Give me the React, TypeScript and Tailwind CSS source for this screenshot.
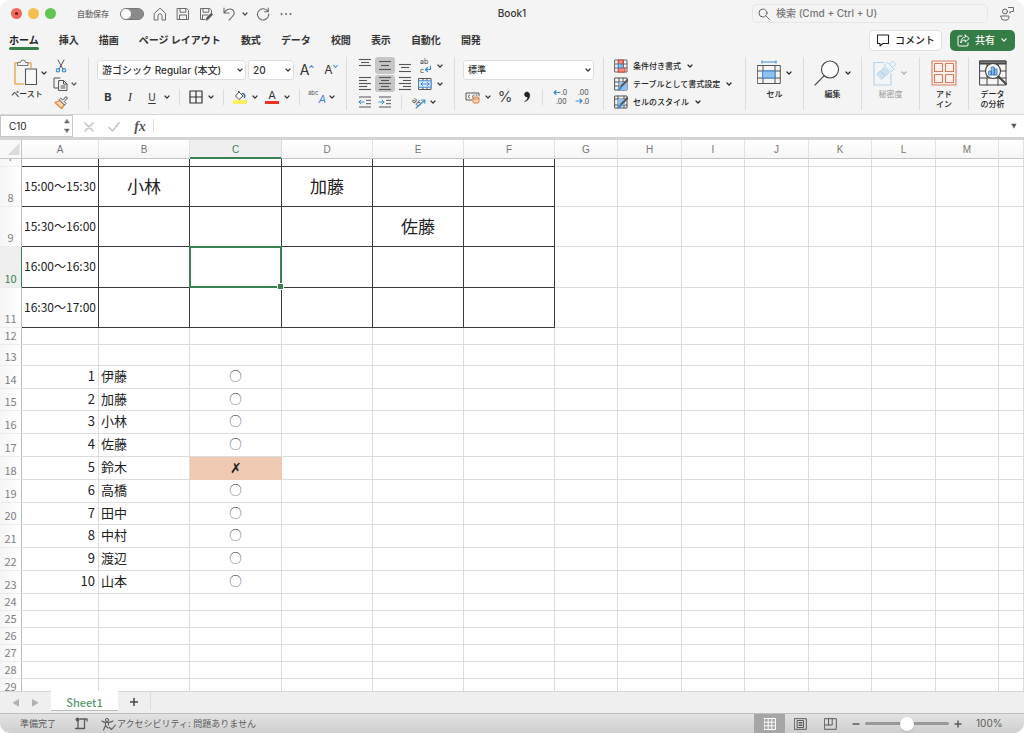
import { useState, type ReactNode } from 'react';
import clsx from 'clsx';

type IconProps = {
  w: number;
  h: number;
  children: ReactNode;
  className?: string;
};

type Row = {
  no: number;
  height: string;
  cells?: string[];
  schedule?: boolean;
};

const tabs = ['挿入', '描画', 'ページ レイアウト', '数式', 'データ', '校閲', '表示', '自動化', '開発'];

const columns = [
  { name: 'A', width: 'w-[77px]' },
  { name: 'B', width: 'w-[91px]' },
  { name: 'C', width: 'w-[92px]' },
  { name: 'D', width: 'w-[91px]' },
  { name: 'E', width: 'w-[91px]' },
  { name: 'F', width: 'w-[91px]' },
  { name: 'G', width: 'w-[63px]' },
  { name: 'H', width: 'w-[64px]' },
  { name: 'I', width: 'w-[63px]' },
  { name: 'J', width: 'w-[64px]' },
  { name: 'K', width: 'w-[63px]' },
  { name: 'L', width: 'w-[64px]' },
  { name: 'M', width: 'w-[63px]' },
  { name: '', width: '' },
];

const rows: Row[] = [
  { no: 7, height: 'h-[8px]', schedule: true },
  { no: 8, height: 'h-[40px]', cells: ['15:00〜15:30', '小林', '', '加藤'], schedule: true },
  { no: 9, height: 'h-[40px]', cells: ['15:30〜16:00', '', '', '', '佐藤'], schedule: true },
  { no: 10, height: 'h-[41px]', cells: ['16:00〜16:30'], schedule: true },
  { no: 11, height: 'h-[40px]', cells: ['16:30〜17:00'], schedule: true },
  { no: 12, height: 'h-[17px]' },
  { no: 13, height: 'h-[21px]' },
  { no: 14, height: 'h-[23px]', cells: ['1', '伊藤', '◯'] },
  { no: 15, height: 'h-[22px]', cells: ['2', '加藤', '◯'] },
  { no: 16, height: 'h-[23px]', cells: ['3', '小林', '◯'] },
  { no: 17, height: 'h-[23px]', cells: ['4', '佐藤', '◯'] },
  { no: 18, height: 'h-[23px]', cells: ['5', '鈴木', '✗'] },
  { no: 19, height: 'h-[23px]', cells: ['6', '高橋', '◯'] },
  { no: 20, height: 'h-[22px]', cells: ['7', '田中', '◯'] },
  { no: 21, height: 'h-[23px]', cells: ['8', '中村', '◯'] },
  { no: 22, height: 'h-[23px]', cells: ['9', '渡辺', '◯'] },
  { no: 23, height: 'h-[23px]', cells: ['10', '山本', '◯'] },
  { no: 24, height: 'h-[17px]' },
  { no: 25, height: 'h-[17px]' },
  { no: 26, height: 'h-[17px]' },
  { no: 27, height: 'h-[17px]' },
  { no: 28, height: 'h-[17px]' },
  { no: 29, height: 'h-[17px]' },
];

function Icon({ w, h, children, className }: IconProps) {
  return (
    <svg
      width={w}
      height={h}
      viewBox={`0 0 ${w} ${h}`}
      fill="none"
      stroke="currentColor"
      strokeLinecap="round"
      strokeLinejoin="round"
      aria-hidden="true"
      className={clsx('shrink-0', className)}
    >
      {children}
    </svg>
  );
}

function Chevron({ className }: { className?: string }) {
  return (
    <Icon w={8} h={8} className={className}>
      <path d="M2 3l2 2.2L6 3" strokeWidth="1.2" />
    </Icon>
  );
}

function Tool({ label, className, children }: { label: string; className?: string; children: ReactNode }) {
  return (
    <button type="button" aria-label={label} className={clsx('flex shrink-0 items-center justify-center', className)}>
      {children}
    </button>
  );
}

function Divider({ className }: { className?: string }) {
  return <span className={clsx('w-px shrink-0 bg-[#dcdcdc]', className)} />;
}

function Lines({ rows: list }: { rows: [number, number, number][] }) {
  return (
    <Icon w={14} h={15} className="text-[#555]">
      {list.map(([x1, x2, y]) => (
        <path key={y} d={`M${x1} ${y}H${x2}`} strokeWidth="1.1" strokeLinecap="butt" />
      ))}
    </Icon>
  );
}

function TitleBar() {
  const [autoSave, setAutoSave] = useState(false);

  return (
    <header className="grid h-[27px] shrink-0 grid-cols-[1fr_auto_1fr] items-center text-[#6a6a6a]">
      <div className="flex items-center pl-[11px]">
        <div className="flex gap-[6px]">
          <button type="button" aria-label="閉じる" className="flex size-[11px] items-center justify-center rounded-full bg-[#ed6a5f]">
            <span className="size-[3px] rounded-full bg-[#7d1512]" />
          </button>
          <button type="button" aria-label="しまう" className="size-[11px] rounded-full bg-[#f5bf4f]" />
          <button type="button" aria-label="拡大" className="size-[11px] rounded-full bg-[#61c554]" />
        </div>
        <span className="ml-[21px] w-[35px] text-[8px] font-medium whitespace-nowrap">自動保存</span>
        <button
          type="button"
          role="switch"
          aria-checked={autoSave}
          aria-label="自動保存"
          onClick={() => setAutoSave(!autoSave)}
          className={clsx(
            'ml-[8px] flex h-[12px] w-[24px] items-center rounded-full border border-[#777]',
            autoSave ? 'justify-end bg-[#367c46]' : 'bg-[#8a8a8a]',
          )}
        >
          <span className="size-[10px] rounded-full bg-white" />
        </button>
        <Tool label="ホーム画面" className="ml-[9px] w-[14px]">
          <Icon w={14} h={14}>
            <path d="M1.5 6.3L7 1.2l5.5 5.1V13H9V8.800a2 2 0 0 0-4 0V13H1.500z" strokeWidth="1" />
          </Icon>
        </Tool>
        <Tool label="保存" className="ml-[9px] w-[14px]">
          <Icon w={14} h={14}>
            <path d="M1.500 1.500h9.200l1.800 1.800v9.200h-11zM4 1.500v3.700h5.800V1.500M3.500 12.500V8h7v4.500" strokeWidth="1" />
          </Icon>
        </Tool>
        <Tool label="名前を付けて保存" className="ml-[9px] w-[14px]">
          <Icon w={14} h={14}>
            <path d="M6 12.500H1.500v-11h9.200l1.800 1.800V6M4 1.500v3.700h5.800V1.500M3.500 12.500V8H9" strokeWidth="1" />
            <path d="M7 13l.5-2.300L12.300 6l1.500 1.500L9.200 12.400z" fill="#555" strokeWidth=".6" />
          </Icon>
        </Tool>
        <Tool label="元に戻す" className="ml-[9px] w-[14px]">
          <Icon w={14} h={14}>
            <path d="M2 1v5h5M2.200 5.700C4.500 2 8.500 1 10.800 3c2.200 2 1.500 4.500 0 6L7 13.200" strokeWidth="1.100" />
          </Icon>
        </Tool>
        <Tool label="元に戻すの履歴" className="ml-[5px] w-[8px] text-[#444]">
          <Chevron />
        </Tool>
        <Tool label="やり直し" className="ml-[7px] w-[14px]">
          <Icon w={14} h={14}>
            <path d="M12.300 1v3.700H8.600M12 4.600A5.600 5.600 0 1 0 12.700 7" strokeWidth="1.100" />
          </Icon>
        </Tool>
        <Tool label="その他" className="ml-[9px] w-[14px]">
          <Icon w={14} h={4}>
            <path d="M2.500 2h.01M7 2h.01M11.500 2h.01" strokeWidth="2" />
          </Icon>
        </Tool>
      </div>
      <h1 className="text-[10px] font-medium text-[#333]">Book1</h1>
      <div className="flex items-center justify-end gap-[12px] pr-[9px]">
        <label className="flex h-[19px] w-[236px] items-center gap-[6px] rounded-[5px] border border-[#e6e6e6] pl-[5px]">
          <Icon w={12} h={12}>
            <circle cx="5" cy="5" r="4" />
            <path d="M8 8l3.500 3.500" />
          </Icon>
          <input
            type="search"
            aria-label="検索"
            placeholder="検索 (Cmd + Ctrl + U)"
            className="w-full text-[10px] font-medium outline-none placeholder:text-[#777]"
          />
        </label>
        <Tool label="アカウント" className="w-[15px]">
          <Icon w={15} h={15}>
            <circle cx="5" cy="5.500" r="2.500" />
            <path d="M1 10h8v1.500a4 2.800 0 0 1-8 0zM8.500 1.500h5v4h-2l-1.500 1.700V5.500" />
          </Icon>
        </Tool>
      </div>
    </header>
  );
}

function RibbonTabs() {
  return (
    <div className="flex h-[26px] shrink-0 items-center justify-between pr-[9px] pl-[9px]">
      <nav className="flex h-full gap-[20px] text-[10px] font-bold whitespace-nowrap text-[#333]">
        <a href="#home" className="relative flex h-[23px] items-center pt-[3px] text-[#222]">
          ホーム
          <span className="absolute inset-x-0 bottom-0 h-[3px] rounded-full bg-[#367c46]" />
        </a>
        {tabs.map((tab) => (
          <a key={tab} href={`#${tab}`} className="flex h-[23px] items-center pt-[3px]">
            {tab}
          </a>
        ))}
      </nav>
      <div className="flex gap-[8px] text-[10px] font-medium">
        <button type="button" className="flex h-[21px] w-[73px] items-center justify-center gap-[5px] rounded-[5px] border border-[#e0e0e0] bg-white text-[#222]">
          <Icon w={14} h={13}>
            <path d="M1.500 1h11v8.500H7L4 12V9.500H1.500z" strokeWidth="1.100" />
          </Icon>
          コメント
        </button>
        <button type="button" className="flex h-[21px] w-[65px] items-center justify-center gap-[5px] rounded-[5px] bg-[#367c46] text-white">
          <Icon w={13} h={13}>
            <path d="M5 2H2a1 1 0 0 0-1 1v8a1 1 0 0 0 1 1h8a1 1 0 0 0 1-1V9M8.200 1l4 3.500-4 3.500V6C6 6 4.500 7 3.800 9 4 5.500 5.500 3.200 8.200 3z" />
          </Icon>
          共有
          <Chevron />
        </button>
      </div>
    </div>
  );
}

function ClipboardGroup() {
  return (
    <div className="flex w-[89px] shrink-0 border-r border-[#dcdcdc] pl-[10px]">
      <button type="button" className="flex w-[38px] flex-col text-[8px] font-medium text-[#333]">
        <span className="flex h-[32px] items-center gap-[1px] pl-[3px]">
          <Icon w={26} h={28}>
            <path d="M5 4H2v21h9M15 4h3v5" stroke="#eab062" strokeWidth="1.600" strokeLinecap="butt" />
            <path d="M5 3.500h2.500a2.500 2.500 0 0 1 5 0H15v3H5z" stroke="#777" fill="#f4f4f4" />
            <path d="M12.500 10h11v15.500h-11z" stroke="#555" fill="#f7f7f7" strokeWidth="1.100" />
          </Icon>
          <Chevron />
        </span>
        <span className="w-[34px] text-center leading-[10px] whitespace-nowrap">ペースト</span>
      </button>
      <div className="ml-[4px] flex flex-col gap-[1px] text-[#555]">
        <Tool label="切り取り" className="h-[17px] w-[17px]">
          <Icon w={12} h={14}>
            <path d="M3 1l4.800 9M9 1L4.200 10" />
            <circle cx="3" cy="11.300" r="1.700" stroke="#3c8ad6" strokeWidth="1.200" />
            <circle cx="9" cy="11.300" r="1.700" stroke="#3c8ad6" strokeWidth="1.200" />
          </Icon>
        </Tool>
        <Tool label="コピー" className="h-[17px] w-[26px] gap-[2px]">
          <Icon w={15} h={14}>
            <path d="M5 11H1V1h6M6 3.500h4.500L14 7v6.500H6zM10.500 3.500V7H14M8 9h4M8 11h4" />
          </Icon>
          <Chevron />
        </Tool>
        <Tool label="書式のコピー" className="h-[17px] w-[17px]">
          <Icon w={14} h={14}>
            <path d="M1 7.500l5-2 4.500 4.500-3 3.500z" stroke="#e08a3a" fill="#f8d7b4" strokeWidth="1.200" />
            <path d="M3 9l3 3" stroke="#e08a3a" />
            <path d="M5.500 5l5 5 1.500-1.500-1.800-2L13.500 3 12 1.500 8.700 5 7 3.500z" fill="#f4f4f4" />
          </Icon>
        </Tool>
      </div>
    </div>
  );
}

function FontGroup() {
  return (
    <div className="flex w-[258px] shrink-0 flex-col gap-[8px] border-r border-[#dcdcdc] pt-[3px] pl-[8px] text-[#333]">
      <div className="flex h-[20px] items-center gap-[2px]">
        <div className="relative">
          <select aria-label="フォント" className="block h-[20px] w-[149px] appearance-none rounded-[3px] border border-[#dedede] bg-white pl-[4px] text-[10px] font-medium">
            <option>游ゴシック Regular (本文)</option>
          </select>
          <Chevron className="pointer-events-none absolute top-[6px] right-[2px]" />
        </div>
        <div className="relative">
          <select aria-label="フォント サイズ" className="block h-[20px] w-[46px] appearance-none rounded-[3px] border border-[#dedede] bg-white pl-[4px] text-[10px] font-medium">
            <option>20</option>
          </select>
          <Chevron className="pointer-events-none absolute top-[6px] right-[2px]" />
        </div>
        <Tool label="フォント サイズの拡大" className="w-[22px]">
          <span className="text-[14px] leading-[18px]">A</span>
          <Icon w={5} h={12} className="text-[#3c8ad6]">
            <path d="M.7 3.500l1.800-2 1.800 2" strokeWidth="1.100" />
          </Icon>
        </Tool>
        <Tool label="フォント サイズの縮小" className="w-[22px]">
          <span className="text-[12px] leading-[18px]">A</span>
          <Icon w={5} h={12} className="text-[#3c8ad6]">
            <path d="M.7 1.500l1.800 2 1.800-2" strokeWidth="1.100" />
          </Icon>
        </Tool>
      </div>
      <div className="flex h-[18px] items-center">
        <Tool label="太字" className="w-[22px] text-[11px] font-bold">B</Tool>
        <Tool label="斜体" className="w-[22px] font-['Liberation_Serif'] text-[12px] italic">I</Tool>
        <Tool label="下線" className="w-[22px] text-[10px] underline underline-offset-2">U</Tool>
        <Tool label="下線の種類" className="w-[8px]"><Chevron /></Tool>
        <Divider className="mx-[8px] h-[16px]" />
        <Tool label="罫線" className="w-[15px]">
          <Icon w={14} h={14}>
            <path d="M1 1h12v12H1zM7 1v12M1 7h12" strokeWidth="1.200" />
          </Icon>
        </Tool>
        <Tool label="罫線の種類" className="ml-[4px] w-[8px]"><Chevron /></Tool>
        <Divider className="mx-[8px] h-[16px]" />
        <Tool label="塗りつぶしの色" className="w-[15px]">
          <Icon w={14} h={14}>
            <path d="M6 2L2.500 6l3.500 3.500L10 6 5.500 1.500z" strokeWidth=".9" fill="#fff" />
            <path d="M9.500 3.500c2 0 2.500 1.500 2 4" stroke="#2f6fc4" strokeWidth="1.600" />
            <path d="M0 12h14" stroke="#fff04a" strokeWidth="3.500" strokeLinecap="butt" />
          </Icon>
        </Tool>
        <Tool label="塗りつぶしの色の一覧" className="ml-[4px] w-[8px]"><Chevron /></Tool>
        <Tool label="フォントの色" className="ml-[6px] w-[14px] flex-col">
          <span className="text-[11px] leading-[11px]">A</span>
          <span className="h-[3px] w-[14px] bg-[#ee3324]" />
        </Tool>
        <Tool label="フォントの色の一覧" className="ml-[4px] w-[8px]"><Chevron /></Tool>
        <Divider className="mx-[8px] h-[16px]" />
        <Tool label="ふりがな" className="w-[18px]">
          <span className="pb-[8px] text-[6px] leading-[8px] text-[#555]">abc</span>
          <span className="pt-[4px] text-[11px] leading-[12px] text-[#3c8ad6] italic">A</span>
        </Tool>
        <Tool label="ふりがなの設定" className="ml-[2px] w-[8px]"><Chevron /></Tool>
      </div>
    </div>
  );
}

function AlignGroup() {
  return (
    <div className="flex w-[108px] shrink-0 flex-col gap-[1px] border-r border-[#dcdcdc] pl-[8px] text-[#333]">
      <div className="flex h-[17px] items-center">
        <Tool label="上揃え" className="h-[17px] w-[20px]">
          <Lines rows={[[1, 13, 1.5], [3, 11, 4.5], [1, 13, 7.5]]} />
        </Tool>
        <Tool label="上下中央揃え" className="h-[17px] w-[20px] rounded-[3px] bg-[#c6c6c6]">
          <Lines rows={[[1, 13, 3.5], [3, 11, 7.5], [1, 13, 11.5]]} />
        </Tool>
        <Tool label="下揃え" className="h-[17px] w-[20px]">
          <Lines rows={[[1, 13, 6.5], [3, 11, 9.5], [1, 13, 13.5]]} />
        </Tool>
        <Tool label="折り返して全体を表示" className="ml-[3px] w-[14px]">
          <Icon w={14} h={17}>
            <text x="2" y="7" fontSize="7" fill="#444" stroke="none">ab</text>
            <text x="2" y="16" fontSize="7" fill="#444" stroke="none">c</text>
            <path d="M12.500 9v3.500H7.500M9.500 10.500l-2 2 2 2" stroke="#3c8ad6" strokeWidth="1.200" />
          </Icon>
        </Tool>
        <Tool label="折り返しの設定" className="ml-[4px] w-[8px]"><Chevron /></Tool>
      </div>
      <div className="flex h-[17px] items-center">
        <Tool label="左揃え" className="h-[17px] w-[20px]">
          <Lines rows={[[1, 13, 1.5], [1, 9, 4.5], [1, 13, 7.5], [1, 9, 10.5], [1, 13, 13.5]]} />
        </Tool>
        <Tool label="中央揃え" className="h-[17px] w-[20px] rounded-[3px] bg-[#c6c6c6]">
          <Lines rows={[[1, 13, 1.5], [3, 11, 4.5], [1, 13, 7.5], [3, 11, 10.5], [1, 13, 13.5]]} />
        </Tool>
        <Tool label="右揃え" className="h-[17px] w-[20px]">
          <Lines rows={[[1, 13, 1.5], [5, 13, 4.5], [1, 13, 7.5], [5, 13, 10.5], [1, 13, 13.5]]} />
        </Tool>
        <Tool label="セルを結合して中央揃え" className="ml-[3px] w-[14px]">
          <Icon w={14} h={14}>
            <path d="M1 1.500h12v11H1zM5 1.500v2M9 1.500v2M5 10.500v2M9 10.500v2" stroke="#555" />
            <path d="M1 3.800h12v6.400H1z" stroke="#3c8ad6" fill="#e4f0fb" />
            <path d="M3 7h8M4.500 5.500L3 7l1.500 1.500M9.500 5.500L11 7 9.500 8.500" stroke="#3c8ad6" />
          </Icon>
        </Tool>
        <Tool label="結合の設定" className="ml-[4px] w-[8px]"><Chevron /></Tool>
      </div>
      <div className="flex h-[17px] items-center">
        <Tool label="インデントを減らす" className="w-[20px]">
          <Icon w={14} h={12}>
            <path d="M1 1h12M8 4.300h5M8 7.700h5M1 11h12" stroke="#555" strokeLinecap="butt" />
            <path d="M6 6H1M3 4L1 6l2 2" stroke="#3c8ad6" />
          </Icon>
        </Tool>
        <Tool label="インデントを増やす" className="w-[20px]">
          <Icon w={14} h={12}>
            <path d="M1 1h12M8 4.300h5M8 7.700h5M1 11h12" stroke="#555" strokeLinecap="butt" />
            <path d="M1 6h5M4 4l2 2-2 2" stroke="#3c8ad6" />
          </Icon>
        </Tool>
        <Divider className="mr-[9px] ml-[6px] h-[14px]" />
        <Tool label="文字の方向" className="w-[16px]">
          <Icon w={16} h={14}>
            <text x="2" y="8" fontSize="8" fill="#444" stroke="none" transform="rotate(40 4 5)">ab</text>
            <path d="M5 13l8.500-7.500M10.500 5h3.300v3.300" stroke="#3c8ad6" strokeWidth="1.100" />
          </Icon>
        </Tool>
        <Tool label="文字の方向の設定" className="ml-[2px] w-[8px]"><Chevron /></Tool>
      </div>
    </div>
  );
}

function NumberGroup() {
  return (
    <div className="flex w-[149px] shrink-0 flex-col gap-[8px] border-r border-[#dcdcdc] pt-[3px] pl-[8px] text-[#333]">
      <div className="relative w-[131px]">
        <select aria-label="表示形式" className="block h-[20px] w-full appearance-none rounded-[3px] border border-[#dedede] bg-white pl-[4px] text-[9px] font-medium">
          <option>標準</option>
        </select>
        <Chevron className="pointer-events-none absolute top-[6px] right-[2px]" />
      </div>
      <div className="flex h-[18px] items-center">
        <Tool label="通貨" className="ml-[2px] w-[16px]">
          <Icon w={16} h={13}>
            <path d="M7 9H1V2h13v3" stroke="#555" />
            <path d="M4.500 4c-1.500 0-1.500 3 0 3M9 4c-2 0-2 3 0 3M11 4h1" stroke="#555" />
            <path d="M8 7v4c0 1.500 6 1.500 6 0V7c0 1.400-6 1.400-6 0c0-1.400 6-1.400 6 0" stroke="#e07b3a" fill="#f9d9bf" />
          </Icon>
        </Tool>
        <Tool label="通貨の種類" className="ml-[3px] w-[8px]"><Chevron /></Tool>
        <Tool label="パーセント" className="ml-[4px] w-[18px] text-[15px] text-[#444]">%</Tool>
        <Tool label="桁区切り" className="ml-[6px] w-[14px]">
          <Icon w={8} h={12}>
            <path d="M4 1a2.500 2.500 0 1 0 .7 4.900C4.500 8 3.500 9.500 1.500 10.800 5 10 6.900 7 6.800 4 6.700 2 5.500 1 4 1z" fill="#222" stroke="#222" strokeWidth=".4" />
          </Icon>
        </Tool>
        <Divider className="mx-[8px] h-[16px]" />
        <Tool label="小数点以下の桁数を増やす" className="w-[18px]">
          <Icon w={15} h={18}>
            <text x="8" y="7" fontSize="7" fill="#444" stroke="none">.0</text>
            <text x="3" y="16" fontSize="7" fill="#444" stroke="none">.00</text>
            <path d="M7 4.500H1M3 2.500l-2 2 2 2" stroke="#3c8ad6" strokeWidth="1.100" />
          </Icon>
        </Tool>
        <Tool label="小数点以下の桁数を減らす" className="ml-[4px] w-[18px]">
          <Icon w={15} h={18}>
            <text x="3" y="7" fontSize="7" fill="#444" stroke="none">.00</text>
            <text x="8" y="16" fontSize="7" fill="#444" stroke="none">.0</text>
            <path d="M1 13h6M5 11l2 2-2 2" stroke="#3c8ad6" strokeWidth="1.100" />
          </Icon>
        </Tool>
      </div>
    </div>
  );
}

function StyleGroup() {
  return (
    <div className="flex w-[142px] shrink-0 flex-col gap-[1px] border-r border-[#dcdcdc] pl-[10px] text-[8px] font-medium whitespace-nowrap text-[#222]">
      <button type="button" className="flex h-[17px] items-center gap-[5px]">
        <Icon w={14} h={14}>
          <path d="M1 1h12v12H1zM1 5h12M1 9h12M4.500 1v12M9.500 1v12" stroke="#666" />
          <path d="M4.500 1H9v4H4.500zM4.500 9H11v4H4.500z" stroke="#d9453a" fill="#f28b82" />
          <path d="M4.500 5H8v4H4.500z" stroke="#3c8ad6" fill="#8fc1f0" />
        </Icon>
        条件付き書式
        <Chevron />
      </button>
      <button type="button" className="flex h-[17px] items-center gap-[5px]">
        <Icon w={14} h={14}>
          <path d="M1 1h12v12H1zM1 5h12M1 9h12M5 1v12M9 1v12" stroke="#555" />
          <path d="M5 5h8v8H5z" fill="#8fc1f0" stroke="none" />
          <path d="M13.500 3L7 9.500" stroke="#555" strokeWidth="2" />
          <path d="M7 9c-2 0-2 3-4 4 3 .5 5-.5 5-3z" fill="#3c8ad6" stroke="none" />
        </Icon>
        テーブルとして書式設定
        <Chevron />
      </button>
      <button type="button" className="flex h-[17px] items-center gap-[5px]">
        <Icon w={14} h={14}>
          <path d="M1 1h12v12H1zM1 4h12M1 10h12M4 1v12M10 1v12" stroke="#555" />
          <path d="M4 4h7v6H4z" fill="#8fc1f0" stroke="none" />
          <path d="M13.500 3L7 9.500" stroke="#555" strokeWidth="2" />
          <path d="M7 9c-2 0-2 3-4 4 3 .5 5-.5 5-3z" fill="#3c8ad6" stroke="none" />
        </Icon>
        セルのスタイル
        <Chevron />
      </button>
    </div>
  );
}

function BigTool({ label, icon, menu, disabled }: { label: ReactNode; icon: ReactNode; menu?: boolean; disabled?: boolean }) {
  return (
    <button
      type="button"
      disabled={disabled}
      className={clsx('flex flex-col items-center text-[8px] font-medium', disabled ? 'text-[#aaa]' : 'text-[#222]')}
    >
      <span className="flex h-[32px] shrink-0 items-center gap-[4px]">
        {icon}
        {menu ? <Chevron /> : null}
      </span>
      <span className="leading-[10px] whitespace-nowrap">{label}</span>
    </button>
  );
}

function Ribbon() {
  return (
    <section className="flex h-[62px] shrink-0 overflow-hidden border-b border-[#d6d6d6] pt-[4px] pb-[4px]">
      <ClipboardGroup />
      <FontGroup />
      <AlignGroup />
      <NumberGroup />
      <StyleGroup />
      <div className="flex w-[58px] shrink-0 justify-center border-r border-[#dcdcdc]">
        <BigTool
          label="セル"
          menu
          icon={
            <Icon w={24} h={26}>
              <path d="M5 2h14M5 .8v2.400M19 .8v2.400" stroke="#3c8ad6" />
              <path d="M.7 5.500h22.600v18H.7zM.7 11h22.600M.7 18h22.600M6 5.500v18M18 5.500v18" stroke="#555" />
              <path d="M6 11h12v7H6z" fill="#8fc1f0" stroke="#3c8ad6" />
            </Icon>
          }
        />
      </div>
      <div className="flex w-[58px] shrink-0 justify-center border-r border-[#dcdcdc]">
        <BigTool
          label="編集"
          menu
          icon={
            <Icon w={26} h={26} className="text-[#444]">
              <circle cx="16" cy="9.500" r="8.500" fill="#fbfbfb" strokeWidth="1.100" />
              <path d="M10 15.800L1 25" strokeWidth="1.100" />
            </Icon>
          }
        />
      </div>
      <div className="flex w-[58px] shrink-0 justify-center border-r border-[#dcdcdc]">
        <BigTool
          label="秘密度"
          menu
          disabled
          icon={
            <Icon w={23} h={26} className="text-[#b5d3ea]">
              <path d="M11 2.500H1V25h17V14" strokeWidth="1.200" />
              <path d="M4 14l3-3 5 5-3 3zM8 10.500l3-3 5 5-3 3z" fill="#cfe2f2" />
              <path d="M11.500 5.500l3-3 6.500 6.500-3 3z" fill="#eef5fb" />
              <path d="M17 4.500L19.500 1 23 4.500 19.500 7" fill="#eef5fb" />
            </Icon>
          }
        />
      </div>
      <div className="flex w-[49px] shrink-0 justify-center border-r border-[#dcdcdc]">
        <BigTool
          label={<>アド<br />イン</>}
          icon={
            <Icon w={26} h={26} className="text-[#dd7b5f]">
              <path d="M1 1h24v24H1zM3.500 3.500h8v8h-8zM14.500 3.500h8v8h-8zM3.500 14.500h8v8h-8zM14.500 14.500h8v8h-8z" strokeWidth="1.100" fill="#fcf1ec" />
            </Icon>
          }
        />
      </div>
      <div className="flex w-[47px] shrink-0 justify-center">
        <BigTool
          label={<>データ<br />の分析</>}
          icon={
            <Icon w={28} h={28} className="text-[#444]">
              <path d="M1 2h26v24H1zM1 5h26M1 12h26M1 19h26M8 5v21M19 5v21" />
              <path d="M1 2h26v2.500H1z" fill="#777" />
              <circle cx="14" cy="12" r="7.500" fill="#f7f7f7" strokeWidth="1.200" />
              <path d="M19.500 17.500L27 25" strokeWidth="2" />
              <path d="M10 12h2.500v4H10zM12.700 8h2.600v8h-2.600zM15.500 10H18v6h-2.500z" fill="#8fc1f0" stroke="#2f6fae" strokeWidth=".8" />
            </Icon>
          }
        />
      </div>
    </section>
  );
}

function FormulaBar() {
  return (
    <div className="flex h-[25px] shrink-0 items-center border-b-[3px] border-[#d4d4d4] bg-white">
      <div className="flex h-full w-[73px] items-center justify-between border border-[#c6c6c6] pr-[1px] pl-[8px]">
        <input aria-label="名前ボックス" defaultValue="C10" className="w-[50px] text-[10px] text-[#222] outline-none" />
        <Icon w={8} h={18} className="text-[#666]">
          <path d="M4 2.500L6.300 6H1.700zM4 15.500L6.300 12H1.700z" fill="currentColor" strokeWidth=".5" />
        </Icon>
      </div>
      <div className="ml-[10px] flex items-center gap-[13px] pt-[2px] text-[#c6c6c6]">
        <Tool label="キャンセル" className="w-[12px]">
          <Icon w={10} h={10}>
            <path d="M1 1l8 8M9 1L1 9" strokeWidth="1.700" />
          </Icon>
        </Tool>
        <Tool label="入力" className="w-[12px]">
          <Icon w={12} h={10}>
            <path d="M1 5.500L4.500 9 11 1" strokeWidth="1.700" />
          </Icon>
        </Tool>
        <Tool label="関数の挿入" className="w-[14px] font-['Liberation_Serif'] text-[14px] leading-[16px] font-bold text-[#555] italic">
          fx
        </Tool>
      </div>
      <Divider className="ml-[6px] h-[14px]" />
      <input aria-label="数式バー" className="min-w-0 flex-1 px-[6px] text-[10px] outline-none" />
      <Tool label="数式バーの展開" className="w-[21px] text-[#555]">
        <Icon w={6} h={6}>
          <path d="M.8 1h4.400L3 5z" fill="currentColor" strokeWidth=".5" />
        </Icon>
      </Tool>
    </div>
  );
}

function Cell({ row, index }: { row: Row; index: number }) {
  const value = row.cells?.[index] ?? '';
  const framed = row.schedule && index < 6;
  const selected = row.no === 10 && index === 2;
  const crossed = value === '✗';

  return (
    <td
      className={clsx(
        'border-r border-b px-0 pt-0 pb-[2px] align-middle whitespace-nowrap',
        framed ? 'border-[#3a3a3a]' : crossed ? 'border-[#efc9b1] bg-[#efc9b1]' : 'border-[#dcdcdc]',
        row.schedule && (index === 0 ? 'text-center text-[12px] leading-[16px]' : 'text-center text-[17px] leading-[20px]'),
        !row.schedule && index === 0 && 'pr-[3px] text-right text-[13px] leading-[16px]',
        !row.schedule && index === 1 && 'pl-[2px] text-[13px] leading-[16px]',
        !row.schedule && index === 2 && 'text-center leading-[16px]',
        !row.schedule && index === 2 && (crossed ? 'text-[14px]' : 'text-[12px]'),
        selected && 'relative z-10',
      )}
    >
      {value}
      {selected ? (
        <span className="absolute -inset-px border-2 border-[#3b8050]">
          <span className="absolute -right-[3px] -bottom-[3px] size-[5px] bg-[#3b8050] outline outline-white" />
        </span>
      ) : null}
    </td>
  );
}

function Sheet() {
  return (
    <main className="min-h-0 flex-1 overflow-hidden bg-white">
      <table className="w-full table-fixed border-separate border-spacing-0 font-['Noto_Sans_CJK_JP',sans-serif] text-[#222]">
        <colgroup>
          <col className="w-[22px]" />
          {columns.map((column) => (
            <col key={column.name} className={column.width} />
          ))}
        </colgroup>
        <thead>
          <tr className="h-[19px] font-['Liberation_Sans'] text-[10px] leading-[14px] text-[#777]">
            <th className="border-r border-b border-[#c4c4c4] bg-[#f8f8f8] p-0">
              <Icon w={14} h={14} className="ml-auto">
                <path d="M12.500 1v12H.5z" fill="#dcdcdc" stroke="none" />
              </Icon>
            </th>
            {columns.map((column) => (
              <th
                key={column.name}
                scope="col"
                className={clsx(
                  'border-r px-0 pt-[2px] pb-0 font-normal',
                  column.name === 'C'
                    ? 'border-b-2 border-r-[#dcdcdc] border-b-[#3b8050] bg-[#efefef] text-[#3b8050]'
                    : 'border-b border-r-[#e2e2e2] border-b-[#c4c4c4] bg-linear-to-b from-white to-[#f5f5f5]',
                )}
              >
                {column.name}
              </th>
            ))}
          </tr>
        </thead>
        <tbody>
          {rows.map((row) => (
            <tr key={row.no} className={row.height}>
              <th
                scope="row"
                className={clsx(
                  'border-r border-b border-b-[#ececec] p-0 text-center align-bottom text-[11px] font-normal',
                  row.no === 10
                    ? 'border-r-[#3b8050] bg-[#efefef] text-[#3b8050]'
                    : 'border-r-[#bdbdbd] bg-linear-to-r from-[#f5f5f5] to-white text-[#808080]',
                )}
              >
                {row.no === 7 ? (
                  <div className="flex h-[7px] items-end justify-center overflow-hidden pb-[3px] leading-[14px]">7</div>
                ) : (
                  <div className="pb-[2px] leading-[14px]">{row.no}</div>
                )}
              </th>
              {columns.map((column, index) => (
                <Cell key={column.name} row={row} index={index} />
              ))}
            </tr>
          ))}
        </tbody>
      </table>
    </main>
  );
}

function SheetTabs() {
  return (
    <nav className="flex h-[22px] shrink-0 border-t border-[#d6d6d6] bg-[#efefef]">
      <div className="flex w-[51px] items-center gap-[11px] pl-[12px] text-[#b0b0b0]">
        <Tool label="前のシート" className="w-[8px]">
          <Icon w={8} h={8}><path d="M6.500 1v6l-5-3z" fill="currentColor" /></Icon>
        </Tool>
        <Tool label="次のシート" className="w-[8px]">
          <Icon w={8} h={8}><path d="M1.500 1v6l5-3z" fill="currentColor" /></Icon>
        </Tool>
      </div>
      <button type="button" className="-mt-px h-[20px] w-[67px] border-b border-[#bbb] bg-white pt-[2px] font-['Noto_Sans_CJK_JP',sans-serif] text-[11px] leading-[18px] font-medium text-[#5b9a6c]">
        Sheet1
      </button>
      <Tool label="シートの追加" className="h-[20px] w-[32px] text-[#444]">
        <Icon w={10} h={10}><path d="M5 1v8M1 5h8" strokeWidth="1.500" strokeLinecap="butt" /></Icon>
      </Tool>
      <Divider className="h-[18px]" />
    </nav>
  );
}

function StatusBar() {
  const [zoom, setZoom] = useState(100);

  return (
    <footer className="flex h-[20px] shrink-0 items-center border-t border-[#bdbdbd] bg-linear-to-b from-[#e2e2e2] to-[#cfcfcf] pl-[20px] text-[9px] text-[#5a5a5a]">
      <span>準備完了</span>
      <Icon w={14} h={13} className="ml-[18px]">
        <path d="M4 4v7.500h6.500V2h2.500v2M4 11.500H1.500M6 2h5M10.500 11.500v-2" strokeWidth="1.300" />
        <circle cx="3.500" cy="2.500" r="2" fill="currentColor" stroke="none" />
      </Icon>
      <Icon w={16} h={14} className="ml-[13px]">
        <circle cx="6" cy="3" r="1.600" />
        <path d="M1 4c2 2 8 2 11 0M4.500 5.500v3L2.500 13M7.500 6v2M5 9l2 2M8.500 10.500l2 2L14.500 8" strokeWidth="1.100" />
      </Icon>
      <span>アクセシビリティ: 問題ありません</span>
      <div className="ml-auto flex h-full items-center">
        <Tool label="標準表示" className="h-full w-[31px] bg-[#a6a6a6] text-white">
          <Icon w={12} h={12}>
            <path d="M.5 .5h11v11H.5zM.5 4.200h11M.5 7.800h11M4.200 .5v11M7.800 .5v11" strokeWidth="1" />
          </Icon>
        </Tool>
        <Tool label="ページ レイアウト表示" className="h-full w-[30px]">
          <Icon w={13} h={12}>
            <path d="M.7 .7h11.600v10.600H.7zM3.500 2.500h6v7h-6zM5 4.500h3M5 6h3M5 7.500h3" />
          </Icon>
        </Tool>
        <Tool label="改ページ プレビュー" className="h-full w-[30px]">
          <Icon w={13} h={12}>
            <path d="M.7 .7h11.600v10.600H.7zM.7 7h7.500V.7M4.500 .7V7" />
          </Icon>
        </Tool>
        <Tool label="縮小" className="ml-[7px] w-[8px]">
          <Icon w={8} h={8}><path d="M.5 4h7" strokeWidth="1.500" strokeLinecap="butt" /></Icon>
        </Tool>
        <input
          type="range"
          aria-label="ズーム"
          min={0}
          max={200}
          value={zoom}
          onChange={(event) => setZoom(Number(event.target.value))}
          className="mx-[5px] h-[3px] w-[84px] appearance-none rounded-full bg-[#999] [&::-webkit-slider-thumb]:size-[14px] [&::-webkit-slider-thumb]:appearance-none [&::-webkit-slider-thumb]:rounded-full [&::-webkit-slider-thumb]:bg-white [&::-webkit-slider-thumb]:shadow-sm"
        />
        <Tool label="拡大" className="w-[8px]">
          <Icon w={8} h={8}><path d="M.5 4h7M4 .5v7" strokeWidth="1.500" strokeLinecap="butt" /></Icon>
        </Tool>
        <span className="w-[62px] pl-[14px] text-[10px]">{zoom}%</span>
      </div>
    </footer>
  );
}

export default function App() {
  return (
    <div className="flex h-screen flex-col overflow-hidden rounded-[10px] bg-[#f4f4f4] font-['Inter','Noto_Sans_CJK_JP',sans-serif]">
      <TitleBar />
      <RibbonTabs />
      <Ribbon />
      <FormulaBar />
      <Sheet />
      <SheetTabs />
      <StatusBar />
    </div>
  );
}
